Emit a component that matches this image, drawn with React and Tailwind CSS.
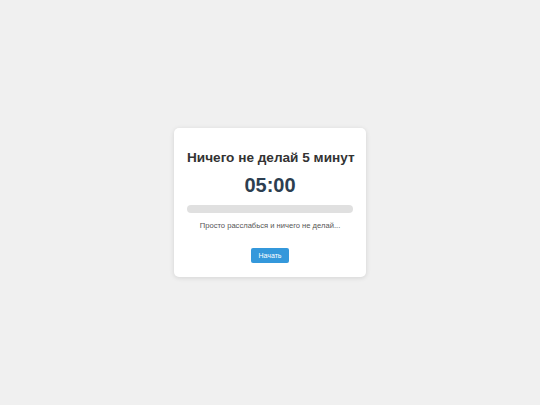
import React from 'react';

const App = () => {
  return (
    <div className="min-h-screen w-full bg-[#f0f0f0] flex items-center justify-center font-['Liberation_Sans',Arial,sans-serif]">
      <div className="w-[192px] bg-white rounded-[5px] shadow-[0_1px_5px_rgba(0,0,0,0.12)] px-[13px] pt-[22px] pb-[14px] text-center">
        <h1 className="text-[13.6px] leading-[16px] font-bold text-[#333] mb-[7px] whitespace-nowrap">Ничего не делай 5 минут</h1>
        <div className="text-[20px] leading-[24px] font-bold text-[#2c3e50] mb-[8px]">05:00</div>
        <div className="w-full h-[8px] rounded-full bg-[#e0e0e0] overflow-hidden mb-[8px]">
          <div className="h-full bg-[#3498db]" style={{ width: '0%' }} />
        </div>
        <p className="text-[7.6px] leading-[10px] text-[#555] mb-[17px]">Просто расслабься и ничего не делай...</p>
        <div className="flex justify-center">
          <button className="bg-[#3498db] text-white text-[7px] leading-[9px] px-[7px] py-[3px] rounded-[2px]">Начать</button>
        </div>
      </div>
    </div>
  );
};

export default App;
